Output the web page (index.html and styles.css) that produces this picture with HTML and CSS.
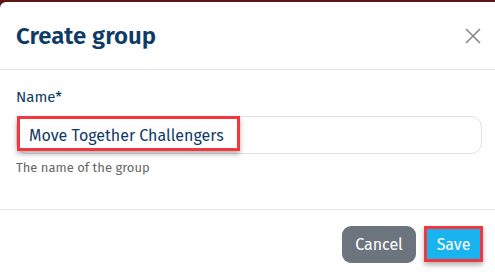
FILE: index.html
```html
<!DOCTYPE html>
<html lang="en">
<head>
    <meta charset="UTF-8">
    <title>Create group</title>
    <link rel="stylesheet" href="styles.css">
</head>
<body>
<div class="modal">
    <div class="modal-header">
        <h2 class="modal-title">Create group</h2>
        <button class="close" type="button" aria-label="Close">
            <svg width="16" height="16" viewBox="0 0 16 16">
                <path d="M1 1L15 15M15 1L1 15" stroke="#888" stroke-width="1.6" fill="none"/>
            </svg>
        </button>
    </div>
    <div class="modal-body">
        <label class="label" for="name">Name*</label>
        <div class="field">
            <input class="input" id="name" type="text" value="Move Together Challengers">
            <span class="mark mark-input"></span>
        </div>
        <div class="help">The name of the group</div>
    </div>
    <div class="modal-footer">
        <button class="btn btn-cancel" type="button">Cancel</button>
        <button class="btn btn-save" type="button">Save</button>
    </div>
</div>
</body>
</html>
```

FILE: styles.css
```css
html, body{
    margin: 0;
    height: 100%;
}
body{
    background: #5f161b;
    font-family: "Fira Sans", Roboto, "Liberation Sans", sans-serif;
    overflow: hidden;
}
.modal{
    margin-top: 2px;
    height: 277px;
    background: #fff;
    border-top-left-radius: 6px;
}
.modal-header{
    display: flex;
    align-items: center;
    justify-content: space-between;
    height: 67px;
    padding: 0 12px 0 16px;
    border-bottom: 1px solid #e2e2e2;
}
.modal-title{
    margin: 0;
    font-size: 24px;
    font-weight: 600;
    color: #0e3a66;
}
.close{
    border: 0;
    background: none;
    padding: 0;
    width: 20px;
    height: 20px;
    display: flex;
    align-items: center;
    justify-content: center;
}
.modal-body{
    padding: 18px 13px 0 16px;
    height: 121px;
    border-bottom: 1px solid #e2e2e2;
}
.label{
    display: block;
    font-size: 15px;
    color: #0e3a66;
    margin-bottom: 10px;
}
.field{
    position: relative;
}
.input{
    display: block;
    box-sizing: border-box;
    width: 100%;
    height: 38px;
    border: 1px solid #dfe1e5;
    border-radius: 11px;
    padding: 0 12px;
    font-family: inherit;
    font-size: 16px;
    color: #0e3a66;
    outline: none;
}
.mark{
    position: absolute;
    border: 3px solid #f2373e;
    box-shadow: 0 3px 5px rgba(0,0,0,.3);
}
.mark-input{
    left: 1px;
    top: 0;
    width: 217px;
    height: 29px;
}
.help{
    margin-top: 6px;
    font-size: 13px;
    color: #666;
}
.modal-footer{
    display: flex;
    justify-content: flex-end;
    gap: 8px;
    padding: 16px 12px 0 0;
}
.btn{
    font-family: inherit;
    font-size: 16px;
    color: #fff;
    border: 0;
    height: 37px;
}
.btn-cancel{
    background: #6c757d;
    border-radius: 9px;
    width: 74px;
}
.btn-save{
    background: #19b4f0;
    border: 3px solid #f2373e;
    box-shadow: 0 3px 5px rgba(0,0,0,.3);
    width: 59px;
    height: 36px;
}
```
